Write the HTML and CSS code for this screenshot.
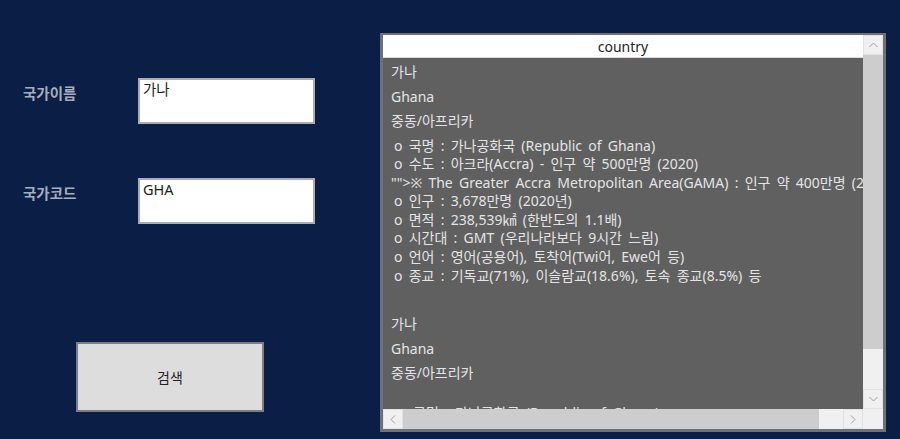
FILE: index.html
```html
<!DOCTYPE html>
<html lang="ko">
<head>
<meta charset="utf-8">
<title>country</title>
<link rel="stylesheet" href="styles.css">
</head>
<body>
<div class="app">
  <div class="form">
    <div class="field field-name">
      <label class="label">국가이름</label>
      <div class="input">가나</div>
    </div>
    <div class="field field-code">
      <label class="label">국가코드</label>
      <div class="input">GHA</div>
    </div>
    <button class="search">검색</button>
  </div>

  <div class="panel">
    <div class="header">country</div>
    <div class="vscroll">
      <div class="sbtn vbtn">
        <svg width="9" height="6" viewBox="0 0 9 6"><polyline points="0.5,5 4.5,1 8.5,5" fill="none" stroke="#a0a0a0" stroke-width="1"/></svg>
      </div>
      <div class="vthumb"></div>
      <div class="vtrack"></div>
      <div class="sbtn vbtn down">
        <svg width="9" height="6" viewBox="0 0 9 6"><polyline points="0.5,1 4.5,5 8.5,1" fill="none" stroke="#a0a0a0" stroke-width="1"/></svg>
      </div>
    </div>
    <div class="content">
      <div class="item">
        <div class="title">가나</div>
        <div class="title">Ghana</div>
        <div class="title">중동/아프리카</div>
        <div class="desc">
          <div class="dl">o 국명 : 가나공화국 (Republic of Ghana)</div>
          <div class="dl">o 수도 : 아크라(Accra) - 인구 약 500만명 (2020)</div>
          <div class="dl nob">"">※ The Greater Accra Metropolitan Area(GAMA) : 인구 약 400만명 (2010)</div>
          <div class="dl">o 인구 : 3,678만명 (2020년)</div>
          <div class="dl">o 면적 : 238,539㎢ (한반도의 1.1배)</div>
          <div class="dl">o 시간대 : GMT (우리나라보다 9시간 느림)</div>
          <div class="dl">o 언어 : 영어(공용어), 토착어(Twi어, Ewe어 등)</div>
          <div class="dl">o 종교 : 기독교(71%), 이슬람교(18.6%), 토속 종교(8.5%) 등</div>
        </div>
      </div>
      <div class="item item-next">
        <div class="title">가나</div>
        <div class="title">Ghana</div>
        <div class="title">중동/아프리카</div>
        <div class="desc desc-next">
          <div class="dl">ㅇ 국명 : 가나공화국 (Republic of Ghana)</div>
        </div>
      </div>
    </div>
    <div class="hscroll">
      <div class="sbtn hbtn">
        <svg width="6" height="9" viewBox="0 0 6 9"><polyline points="5,0.5 1,4.5 5,8.5" fill="none" stroke="#a0a0a0" stroke-width="1"/></svg>
      </div>
      <div class="hthumb"></div>
      <div class="htrack"></div>
      <div class="sbtn hbtn">
        <svg width="6" height="9" viewBox="0 0 6 9"><polyline points="1,0.5 5,4.5 1,8.5" fill="none" stroke="#a0a0a0" stroke-width="1"/></svg>
      </div>
    </div>
    <div class="corner"></div>
  </div>
</div>
</body>
</html>
```

FILE: styles.css
```css
* { box-sizing: border-box; }

html, body {
  margin: 0;
  padding: 0;
}

body {
  width: 900px;
  height: 439px;
  overflow: hidden;
  background: #0b1f46;
  font-family: "Noto Sans", "Noto Sans CJK KR", sans-serif;
  font-size: 14px;
}

.app {
  display: flex;
  align-items: flex-start;
}

.form {
  width: 379px;
  display: flex;
  flex-direction: column;
  padding-top: 78px;
}

.field {
  display: flex;
  align-items: flex-start;
  padding-left: 23px;
}

.field-code {
  margin-top: 54px;
}

.label {
  width: 115px;
  margin-top: 5px;
  line-height: 20px;
  font-family: "Noto Sans CJK KR", sans-serif;
  font-weight: 700;
  font-size: 14.5px;
  color: #a6adbd;
}

.input {
  width: 177px;
  height: 46px;
  background: #ffffff;
  border: 2px solid #a9acb3;
  padding: 0 3px;
  line-height: 19px;
  font-size: 14.5px;
  color: #1e1e1e;
}

.search {
  margin: 118px 0 0 76px;
  width: 188px;
  height: 70px;
  background: #dddddd;
  border: 2px solid #7b7e84;
  font-family: "Noto Sans CJK KR", sans-serif;
  font-size: 14px;
  color: #222;
  padding: 0;
}

.panel {
  margin-top: 33px;
  margin-left: 1px;
  width: 506px;
  height: 399px;
  border: 3px solid #6f7175;
  border-top-width: 2px;
  background: #606060;
  display: grid;
  grid-template-columns: minmax(0, 1fr) 20px;
  grid-template-rows: 23px minmax(0, 1fr) 20px;
}

.header {
  grid-column: 1;
  grid-row: 1;
  background: #ffffff;
  border-bottom: 1px solid #d8d8d8;
  text-align: center;
  padding-top: 1px;
  line-height: 22px;
  font-size: 14px;
  color: #1e1e1e;
}

.vscroll {
  grid-column: 2;
  grid-row: 1 / 3;
  display: flex;
  flex-direction: column;
  background: #f0f0f0;
  min-height: 0;
}

.sbtn {
  background: #f0f0f0;
  display: flex;
  align-items: center;
  justify-content: center;
  flex: none;
}

.vbtn {
  height: 20px;
  border: 1px solid #e2e2e2;
}

.vthumb {
  height: 294px;
  background: #cdcdcd;
  flex: none;
}

.vtrack {
  flex: 1;
  background: #f0f0f0;
}

.content {
  grid-column: 1;
  grid-row: 2;
  min-height: 0;
  min-width: 0;
  overflow: hidden;
  padding: 2px 0 0 8px;
  color: #e4e4e4;
  white-space: nowrap;
}

.title {
  line-height: 24.5px;
  font-size: 14px;
}

.desc {
  margin-top: 3px;
  font-size: 14px;
  word-spacing: 2.6px;
}

.dl {
  line-height: 18.6px;
  padding-left: 3px;
}

.dl.nob {
  padding-left: 0;
}

.item-next {
  margin-top: 27px;
}

.desc-next {
  margin-top: 18px;
}

.hscroll {
  grid-column: 1;
  grid-row: 3;
  display: flex;
  background: #f0f0f0;
}

.hbtn {
  width: 20px;
  border: 1px solid #e2e2e2;
}

.hthumb {
  width: 416px;
  background: #cdcdcd;
  flex: none;
}

.htrack {
  flex: 1;
}

.corner {
  grid-column: 2;
  grid-row: 3;
  background: #f0f0f0;
}
```
